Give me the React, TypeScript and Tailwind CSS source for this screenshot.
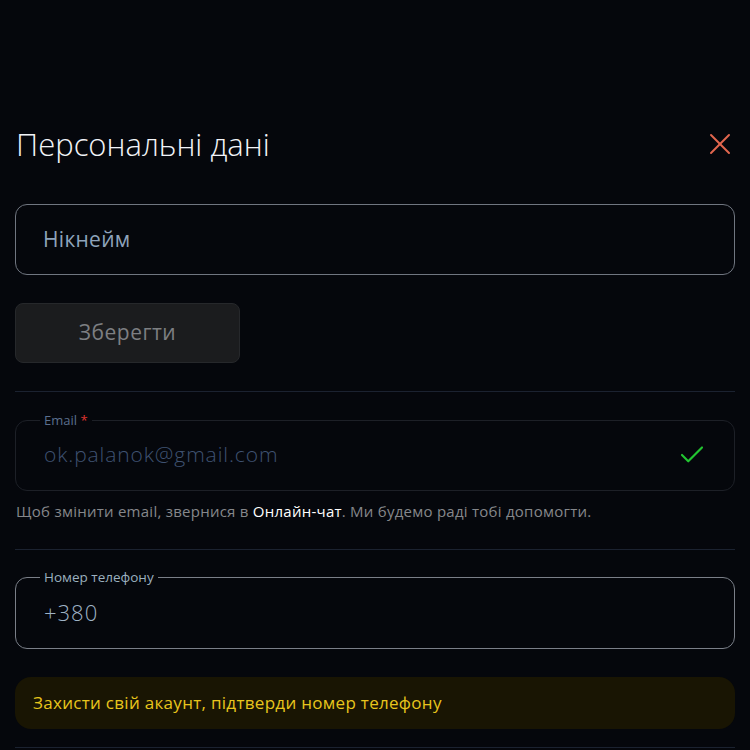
import { X, Check } from 'lucide-react';

const sans = "font-['Open_Sans','Noto_Sans',sans-serif]";

function Divider() {
  return <div className="h-px bg-[#1b2230]" />;
}

export default function App() {
  return (
    <div className={`min-h-[750px] bg-[#05070c] px-[15px] ${sans}`}>
      <header className="flex items-center justify-between pt-[124px] pb-[40px]">
        <h1 className="pl-px text-[31px] font-light leading-[40px] text-[#f2f4f8]">Персональні дані</h1>
        <button className="-mr-[3px] text-[#e2664f]">
          <X size={36} strokeWidth={1.3} />
        </button>
      </header>

      <div className="flex h-[71px] items-center rounded-[12px] border border-[#707680] px-[27px]">
        <span className="text-[21px] font-normal tracking-[0.3px] text-[#8ea3bb]">Нікнейм</span>
      </div>

      <button className="mt-[28px] flex h-[60px] w-[225px] items-center justify-center rounded-[8px] border border-[#26282b] bg-[#1b1c1e] text-[21px] font-medium tracking-[0.5px] text-[#7d7f82]">
        Зберегти
      </button>

      <div className="mt-[28px]">
        <Divider />
      </div>

      <fieldset className="mt-[20px] flex h-[79px] items-center rounded-[12px] border border-[#1d2027] pr-[27px] pl-[24px]">
        <legend className="px-[4px] text-[13px] leading-[16px] text-[#5b6f8e]">
          Email <span className="text-[#e0342f]">*</span>
        </legend>
        <div className="flex w-full items-center justify-between pb-[8px]">
          <span className="px-[4px] text-[21px] font-light tracking-[0.9px] text-[#3f5271]">ok.palanok@gmail.com</span>
          <Check size={30} strokeWidth={1.7} className="text-[#22c531]" />
        </div>
      </fieldset>

      <p className="mt-[10px] pl-px text-[15px] leading-[20px] tracking-[0.25px] text-[#85878b]">
        Щоб змінити email, звернися в <span className="font-medium text-white">Онлайн-чат</span>. Ми будемо раді тобі допомогти.
      </p>

      <div className="mt-[28px]">
        <Divider />
      </div>

      <fieldset className="mt-[19px] flex h-[80px] items-center rounded-[12px] border border-[#7a7f88] pl-[24px]">
        <legend className="px-[4px] text-[13.5px] leading-[16px] text-[#9bb0bf]">Номер телефону</legend>
        <span className="px-[4px] pb-[8px] text-[22px] font-light tracking-[1px] text-[#9fb3c6]">+380</span>
      </fieldset>

      <div className="mt-[28px] flex h-[52px] items-center rounded-[16px] bg-[#191503] px-[18px]">
        <span className="text-[17px] tracking-[0.3px] text-[#e8c51c]">
          Захисти свій акаунт, підтверди номер телефону
        </span>
      </div>

      <div className="mt-[18px]">
        <Divider />
      </div>
    </div>
  );
}
